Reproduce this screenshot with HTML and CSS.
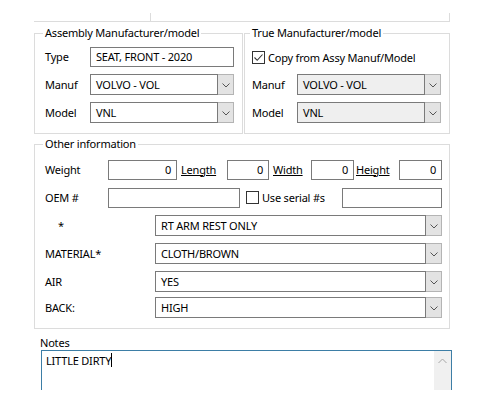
FILE: index.html
```html
<!DOCTYPE html>
<html>
<head>
<meta charset="utf-8">
<link rel="stylesheet" href="styles.css">
</head>
<body>
<div class="page">
  <div class="topstrip">
    <div class="topcell"><div class="topleft"></div></div>
  </div>

  <div class="mfgrow">
    <fieldset class="group asm">
      <legend>Assembly Manufacturer/model</legend>
      <div class="form">
        <span class="lbl">Type</span>
        <div class="tb">SEAT, FRONT - 2020</div>
        <span class="lbl">Manuf</span>
        <div class="combo"><span class="val">VOLVO - VOL</span><span class="btn"><svg width="8" height="5" viewBox="0 0 8 5"><polyline points="0.5,0.5 4,4 7.5,0.5" fill="none" stroke="#555" stroke-width="1"/></svg></span></div>
        <span class="lbl">Model</span>
        <div class="combo"><span class="val">VNL</span><span class="btn"><svg width="8" height="5" viewBox="0 0 8 5"><polyline points="0.5,0.5 4,4 7.5,0.5" fill="none" stroke="#555" stroke-width="1"/></svg></span></div>
      </div>
    </fieldset>
    <fieldset class="group true">
      <legend>True Manufacturer/model</legend>
      <div class="form">
        <div class="checkrow wide">
          <span class="cb"><svg width="11" height="11" viewBox="0 0 11 11"><polyline points="1.5,5.5 4.2,8.3 9.5,2.5" fill="none" stroke="#333" stroke-width="1.1"/></svg></span>
          <span>Copy from Assy Manuf/Model</span>
        </div>
        <span class="lbl">Manuf</span>
        <div class="combo disabled"><span class="val">VOLVO - VOL</span><span class="btn"><svg width="8" height="5" viewBox="0 0 8 5"><polyline points="0.5,0.5 4,4 7.5,0.5" fill="none" stroke="#555" stroke-width="1"/></svg></span></div>
        <span class="lbl">Model</span>
        <div class="combo disabled"><span class="val">VNL</span><span class="btn"><svg width="8" height="5" viewBox="0 0 8 5"><polyline points="0.5,0.5 4,4 7.5,0.5" fill="none" stroke="#555" stroke-width="1"/></svg></span></div>
      </div>
    </fieldset>
  </div>

  <fieldset class="group other">
    <legend>Other information</legend>
    <div class="rows">
      <div class="row">
        <span class="lbl w63">Weight</span>
        <div class="tb num w69">0</div>
        <span class="link c50">Length</span>
        <div class="tb num w42">0</div>
        <span class="link c42">Width</span>
        <div class="tb num w43">0</div>
        <span class="link c45">Height</span>
        <div class="tb num w43">0</div>
      </div>
      <div class="row">
        <span class="lbl w63">OEM #</span>
        <div class="tb w132"></div>
        <div class="checkrow c102">
          <span class="cb"></span>
          <span>Use serial #s</span>
        </div>
        <div class="tb w100"></div>
      </div>
      <div class="row">
        <span class="lbl w110 star">*</span>
        <div class="combo big"><span class="val">RT ARM REST ONLY</span><span class="btn"><svg width="8" height="5" viewBox="0 0 8 5"><polyline points="0.5,0.5 4,4 7.5,0.5" fill="none" stroke="#555" stroke-width="1"/></svg></span></div>
      </div>
      <div class="row">
        <span class="lbl w110">MATERIAL*</span>
        <div class="combo big"><span class="val">CLOTH/BROWN</span><span class="btn"><svg width="8" height="5" viewBox="0 0 8 5"><polyline points="0.5,0.5 4,4 7.5,0.5" fill="none" stroke="#555" stroke-width="1"/></svg></span></div>
      </div>
      <div class="row">
        <span class="lbl w110">AIR</span>
        <div class="combo big"><span class="val">YES</span><span class="btn"><svg width="8" height="5" viewBox="0 0 8 5"><polyline points="0.5,0.5 4,4 7.5,0.5" fill="none" stroke="#555" stroke-width="1"/></svg></span></div>
      </div>
      <div class="row last">
        <span class="lbl w110">BACK:</span>
        <div class="combo big"><span class="val">HIGH</span><span class="btn"><svg width="8" height="5" viewBox="0 0 8 5"><polyline points="0.5,0.5 4,4 7.5,0.5" fill="none" stroke="#555" stroke-width="1"/></svg></span></div>
      </div>
    </div>
  </fieldset>

  <div class="notes">
    <div class="notes-lbl">Notes</div>
    <div class="memo">
      <div class="memo-text">LITTLE DIRTY<span class="caret"></span></div>
      <div class="scroll"><svg width="9" height="6" viewBox="0 0 9 6"><polyline points="0.5,5 4.5,1 8.5,5" fill="none" stroke="#a6a6a6" stroke-width="1"/></svg></div>
    </div>
  </div>
</div>
</body>
</html>
```
FILE: styles.css
```css
html, body {
  margin: 0;
  padding: 0;
  background: #ffffff;
}
body {
  font-family: "Noto Sans", "DejaVu Sans", sans-serif;
  font-size: 11px;
  letter-spacing: -0.2px;
  color: #000;
}
.page {
  width: 500px;
  height: 400px;
  overflow: hidden;
  display: flex;
  flex-direction: column;
}
.topstrip {
  height: 22px;
  padding-top: 13px;
  box-sizing: border-box;
}
.topcell {
  margin-left: 34px;
  width: 416px;
  height: 9px;
  box-sizing: border-box;
  border-right: 1px solid #dcdcdc;
  border-bottom: 1px solid #dcdcdc;
}
.topleft {
  width: 117px;
  height: 8px;
  box-sizing: border-box;
  border-right: 1px solid #dcdcdc;
}
.mfgrow {
  display: flex;
  margin-top: 3px;
  margin-left: 34px;
  gap: 1px;
}
.group {
  margin: 0;
  border: 1px solid #dcdcdc;
  min-width: 0;
  box-sizing: border-box;
}
.group legend {
  padding: 0 2px;
  line-height: 16px;
  height: 16px;
  margin-left: -2px;
}
.asm {
  width: 209px;
  padding: 6px 0 10px 10px;
}
.true {
  width: 206px;
  padding: 6px 0 10px 7px;
}
.form {
  display: grid;
  grid-template-columns: 45px 144px;
  grid-template-rows: 20px 21px 21px;
  row-gap: 7px;
  align-items: center;
}
.lbl {
  line-height: 16px;
  white-space: nowrap;
}
.tb {
  box-sizing: border-box;
  height: 20px;
  border: 1px solid #7a7a7a;
  background: #fff;
  padding: 0 5px;
  line-height: 18px;
  white-space: nowrap;
  overflow: hidden;
}
.tb.num {
  text-align: right;
}
.combo {
  display: flex;
  height: 21px;
  box-sizing: border-box;
}
.combo .val {
  flex: 1;
  border: 1px solid #7a7a7a;
  padding: 0 5px;
  line-height: 19px;
  background: #fff;
  white-space: nowrap;
  overflow: hidden;
}
.combo.disabled .val {
  background: #efefef;
}
.combo .btn {
  width: 16px;
  box-sizing: border-box;
  border: 1px solid #b4b4b4;
  border-left: none;
  background: #e3e3e3;
  display: flex;
  align-items: center;
  justify-content: center;
}
.combo .btn svg {
  margin-top: 1px;
}
.checkrow {
  display: flex;
  align-items: center;
  gap: 3px;
  white-space: nowrap;
}
.checkrow.wide {
  grid-column: 1 / 3;
}
.cb {
  width: 13px;
  height: 13px;
  box-sizing: border-box;
  border: 1px solid #333;
  background: #fff;
  display: flex;
  align-items: center;
  justify-content: center;
}
.other {
  margin: 2px 0 0 34px;
  width: 416px;
  padding: 7px 0 10px 10px;
}
.rows {
  display: flex;
  flex-direction: column;
  gap: 7px;
}
.row {
  display: flex;
  align-items: center;
  height: 21px;
}
.row.last {
  margin-top: -2px;
}
.w63 { width: 63px; }
.w110 { width: 110px; }
.w69 { width: 69px; }
.w42 { width: 42px; }
.w43 { width: 43px; }
.w132 { width: 132px; }
.w100 { width: 100px; }
.c50 { width: 50px; box-sizing: border-box; padding-left: 4px; }
.c42 { width: 42px; box-sizing: border-box; padding-left: 4px; }
.c45 { width: 45px; box-sizing: border-box; padding-left: 2px; }
.c102 { width: 102px; box-sizing: border-box; padding-left: 6px; }
.link {
  text-decoration: underline;
  line-height: 16px;
}
.star {
  padding-left: 13px;
  box-sizing: border-box;
}
.combo.big {
  width: 287px;
}
.notes {
  margin-left: 40px;
  margin-top: 7px;
}
.notes-lbl {
  line-height: 14px;
}
.memo {
  margin-top: 0;
  margin-left: 1px;
  width: 411px;
  height: 40px;
  box-sizing: border-box;
  border: 1px solid #3d7ea6;
  border-bottom: none;
  display: flex;
}
.memo-text {
  flex: 1;
  padding: 2px 4px;
  line-height: 16px;
}
.caret {
  display: inline-block;
  width: 1px;
  height: 14px;
  background: #000;
  vertical-align: -2px;
}
.scroll {
  width: 17px;
  background: #f0f0f0;
  display: flex;
  justify-content: center;
  padding-top: 7px;
  box-sizing: border-box;
}
```
